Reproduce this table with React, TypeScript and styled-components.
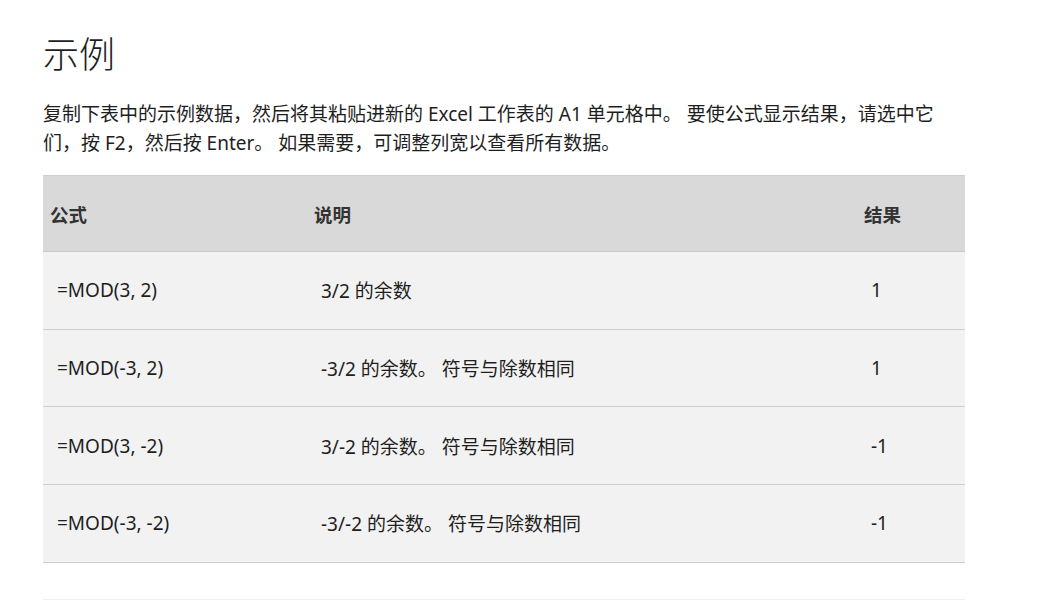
import React from "react";
import styled, { createGlobalStyle } from "styled-components";

const Global = createGlobalStyle`
  html, body { margin: 0; padding: 0; background: #fff; }
  body {
    font-family: "Noto Sans", "Noto Sans CJK SC", sans-serif;
    color: #1e1e1e;
  }
`;

const Page = styled.main`
  padding: 0 0 0 43px;
  width: 922px;
`;

const Title = styled.h1`
  margin: 0;
  padding-top: 27px;
  font-family: "Noto Sans CJK SC", sans-serif;
  font-weight: 300;
  font-size: 36px;
  line-height: 50px;
  color: #1e1e1e;
`;

const Intro = styled.p`
  margin: 23px 0 0;
  font-size: 19px;
  line-height: 29px;
  color: #1e1e1e;
  width: 910px;
`;

const Table = styled.table`
  margin-top: 17px;
  width: 922px;
  border-collapse: collapse;
  table-layout: fixed;
  border-top: 1px solid #cfcfcf;
`;

const Th = styled.th<{ $w: number }>`
  box-sizing: border-box;
  width: ${(p) => p.$w}px;
  background: #d9d9d9;
  height: 76px;
  padding: 0 0 0 7px;
  text-align: left;
  font-family: "Noto Sans CJK SC", sans-serif;
  font-weight: 700;
  font-size: 18.5px;
  color: #333;
  border-bottom: 1px solid #c8c8c8;
`;

const Td = styled.td`
  box-sizing: border-box;
  background: #f2f2f2;
  height: 77.7px;
  padding: 0 0 0 14px;
  font-size: 19px;
  color: #1e1e1e;
  border-bottom: 1px solid #cfcfcf;
  white-space: nowrap;
`;

const Divider = styled.div`
  margin-top: 36px;
  height: 1px;
  background: #f0f0f0;
`;

const rows = [
  ["=MOD(3, 2)", "3/2 的余数", "1"],
  ["=MOD(-3, 2)", "-3/2 的余数。 符号与除数相同", "1"],
  ["=MOD(3, -2)", "3/-2 的余数。 符号与除数相同", "-1"],
  ["=MOD(-3, -2)", "-3/-2 的余数。 符号与除数相同", "-1"],
];

export default function App() {
  return (
    <>
      <Global />
      <Page>
        <Title>示例</Title>
        <Intro>
          复制下表中的示例数据，然后将其粘贴进新的 Excel 工作表的 A1 单元格中。 要使公式显示结果，请选中它们，按 F2，然后按 Enter。 如果需要，可调整列宽以查看所有数据。
        </Intro>
        <Table>
          <thead>
            <tr>
              <Th $w={264}>公式</Th>
              <Th $w={550}>说明</Th>
              <Th $w={108}>结果</Th>
            </tr>
          </thead>
          <tbody>
            {rows.map((r) => (
              <tr key={r[0]}>
                <Td>{r[0]}</Td>
                <Td>{r[1]}</Td>
                <Td>{r[2]}</Td>
              </tr>
            ))}
          </tbody>
        </Table>
        <Divider />
      </Page>
    </>
  );
}
